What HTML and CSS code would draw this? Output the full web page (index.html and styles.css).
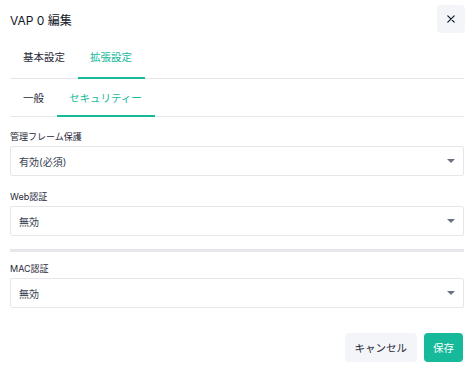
FILE: index.html
```html
<!DOCTYPE html>
<html lang="ja">
<head>
  <meta charset="UTF-8" />
  <title>VAP 0 編集</title>
  <link rel="stylesheet" href="styles.css">
</head>
<body>
  <div class="modal">
    <div class="modal-header">
      <h1>VAP 0 編集</h1>
      <button class="close-btn" aria-label="閉じる">
        <svg width="10" height="10" viewBox="0 0 10 10"><path d="M1.8 1.8l6.4 6.4M8.2 1.8l-6.4 6.4" stroke="#111827" stroke-width="1.2" stroke-linecap="round"/></svg>
      </button>
    </div>
    <div class="tabs">
      <a class="tab">基本設定</a>
      <a class="tab active">拡張設定</a>
    </div>
    <div class="tabs sub">
      <a class="tab">一般</a>
      <a class="tab active">セキュリティー</a>
    </div>
    <div class="field">
      <label>管理フレーム保護</label>
      <div class="select">有効(必須)<span class="caret"></span></div>
    </div>
    <div class="field">
      <label>Web認証</label>
      <div class="select">無効<span class="caret"></span></div>
    </div>
    <hr class="divider">
    <div class="field">
      <label>MAC認証</label>
      <div class="select">無効<span class="caret"></span></div>
    </div>
    <div class="actions">
      <button class="btn">キャンセル</button>
      <button class="btn primary">保存</button>
    </div>
  </div>
</body>
</html>
```
FILE: styles.css
```css
:root {
  --primary: #16b99a;
  --text: #1f2937;
  --muted: #6b7280;
  --border: #e5e7eb;
  --soft: #f4f5f9;
}
* { box-sizing: border-box; margin: 0; padding: 0; }
body {
  font-family: 'Inter', 'Noto Sans CJK JP', sans-serif;
  background: #fff;
  color: var(--text);
}
.modal {
  width: 474px;
  padding: 5px 10px 0;
}
.modal-header {
  display: flex;
  align-items: center;
  justify-content: space-between;
  height: 28px;
  margin-right: -1px;
}
.modal-header h1 {
  font-size: 12px;
  font-weight: 400;
  color: #111827;
}
.close-btn {
  width: 28px;
  height: 28px;
  border: none;
  border-radius: 4px;
  background: var(--soft);
  display: flex;
  align-items: center;
  justify-content: center;
}
.tabs {
  display: flex;
  border-bottom: 1px solid var(--border);
  margin-top: 7px;
}
.tabs.sub { margin-top: 0; }
.tab {
  font-size: 10.5px;
  padding: 9px 13px 11px;
  line-height: 17px;
  color: var(--text);
  border-bottom: 2px solid transparent;
  margin-bottom: -1px;
}
.tab.active {
  color: var(--primary);
  border-bottom-color: var(--primary);
}
.tabs.sub .tab { padding-top: 11px; padding-bottom: 8px; }
.tabs.sub .tab.active { padding-left: 12px; padding-right: 13px; }
.tabs:not(.sub) .tab.active { padding-left: 12px; }
.field { margin-top: 15px; }
.tabs.sub + .field { margin-top: 14px; }
.divider + .field { margin-top: 11px; }
.field label {
  display: block;
  font-size: 9px;
  line-height: 12px;
  margin-bottom: 3px;
  color: var(--text);
}
.select {
  position: relative;
  height: 30px;
  border: 1px solid var(--border);
  border-radius: 2px;
  padding: 0 8px;
  display: flex;
  align-items: center;
  font-size: 10px;
  color: #374151;
}
.caret {
  position: absolute;
  right: 8px;
  top: 12px;
  border-left: 4px solid transparent;
  border-right: 4px solid transparent;
  border-top: 4px solid var(--muted);
}
.divider {
  border: none;
  height: 3px;
  background: var(--border);
  margin-top: 13px;
}
.actions {
  display: flex;
  justify-content: flex-end;
  gap: 7px;
  margin-top: 25px;
  margin-right: 1px;
}
.btn {
  font-family: inherit;
  font-size: 10.5px;
  height: 29px;
  padding: 0 10px;
  border: none;
  border-radius: 4px;
  background: var(--soft);
  color: var(--text);
}
.btn.primary {
  background: var(--primary);
  color: #fff;
  padding: 0 9px;
}
```
